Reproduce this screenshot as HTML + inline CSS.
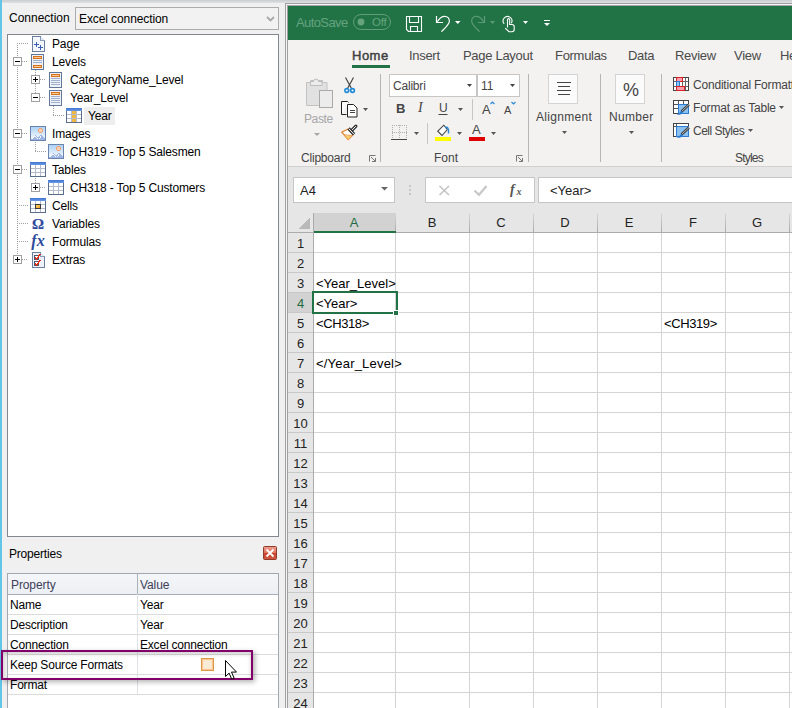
<!DOCTYPE html>
<html><head><meta charset="utf-8">
<style>
*{margin:0;padding:0;box-sizing:border-box}
html,body{width:792px;height:708px;overflow:hidden;background:#f0f0f0;font-family:"Liberation Sans",sans-serif;position:relative}
.a{position:absolute}
.t{position:absolute;white-space:nowrap;line-height:1}
svg{position:absolute;overflow:visible}
</style></head><body>

<div class="a" style="left:0px;top:0px;width:792px;height:3px;background:linear-gradient(#c9cdd2,#dfe1e3)"></div>
<div class="a" style="left:0px;top:0px;width:2px;height:708px;background:#62c6e8"></div>
<div class="t" style="left:9px;top:12px;font-size:12px;color:#000;">Connection</div>
<div class="a" style="left:75px;top:7px;width:204px;height:23px;border:1px solid #acacac;background:#f2f2f2"></div>
<div class="t" style="left:79px;top:13px;font-size:12px;color:#000;letter-spacing:-0.1px">Excel connection</div>
<svg style="left:0;top:0" width="1" height="1"><path d="M267 17l3.5 3.5l3.5-3.5" stroke="#a8a8a8" stroke-width="1.8" fill="none"/></svg>
<div class="a" style="left:7px;top:34px;width:272px;height:503px;border:1px solid #828790;background:#fff"></div>
<div class="t" style="left:52px;top:38px;font-size:12px;color:#000;letter-spacing:-0.15px">Page</div>
<div class="t" style="left:52px;top:56px;font-size:12px;color:#000;letter-spacing:-0.15px">Levels</div>
<div class="t" style="left:70px;top:74px;font-size:12px;color:#000;letter-spacing:-0.15px">CategoryName_Level</div>
<div class="t" style="left:70px;top:92px;font-size:12px;color:#000;letter-spacing:-0.15px">Year_Level</div>
<div class="a" style="left:84px;top:107px;width:31px;height:18px;background:#eeeeee"></div>
<div class="t" style="left:88px;top:110px;font-size:12px;color:#000;letter-spacing:-0.15px">Year</div>
<div class="t" style="left:52px;top:128px;font-size:12px;color:#000;letter-spacing:-0.15px">Images</div>
<div class="t" style="left:70px;top:146px;font-size:12px;color:#000;letter-spacing:-0.15px">CH319 - Top 5 Salesmen</div>
<div class="t" style="left:52px;top:164px;font-size:12px;color:#000;letter-spacing:-0.15px">Tables</div>
<div class="t" style="left:70px;top:182px;font-size:12px;color:#000;letter-spacing:-0.15px">CH318 - Top 5 Customers</div>
<div class="t" style="left:52px;top:200px;font-size:12px;color:#000;letter-spacing:-0.15px">Cells</div>
<div class="t" style="left:52px;top:218px;font-size:12px;color:#000;letter-spacing:-0.15px">Variables</div>
<div class="t" style="left:52px;top:236px;font-size:12px;color:#000;letter-spacing:-0.15px">Formulas</div>
<div class="t" style="left:52px;top:254px;font-size:12px;color:#000;letter-spacing:-0.15px">Extras</div>
<svg style="left:0;top:0" width="290" height="300" shape-rendering="crispEdges"><defs><linearGradient id="tb" x1="0" y1="0" x2="0" y2="1"><stop offset="0" stop-color="#3f74d0"/><stop offset="1" stop-color="#6a9ae8"/></linearGradient><linearGradient id="gold" x1="0" y1="0" x2="1" y2="1"><stop offset="0" stop-color="#f8dc70"/><stop offset="1" stop-color="#f09a18"/></linearGradient><linearGradient id="sky" x1="0" y1="0" x2="0" y2="1"><stop offset="0" stop-color="#a9d0f5"/><stop offset="0.7" stop-color="#e6f1fc"/><stop offset="1" stop-color="#f4f8fe"/></linearGradient></defs><path d="M17.5 43V255" stroke="#a0a0a0" stroke-dasharray="1 1"/><path d="M35.5 70V75" stroke="#a0a0a0" stroke-dasharray="1 1"/><path d="M35.5 84V93" stroke="#a0a0a0" stroke-dasharray="1 1"/><path d="M53.5 106V115" stroke="#a0a0a0" stroke-dasharray="1 1"/><path d="M35.5 142V151" stroke="#a0a0a0" stroke-dasharray="1 1"/><path d="M35.5 178V183" stroke="#a0a0a0" stroke-dasharray="1 1"/><path d="M17 43.5H28" stroke="#a0a0a0" stroke-dasharray="1 1"/><path d="M32.5 36.5h8l4 4v11h-12z" fill="#f4f7fc" stroke="#6b7f9e"/><path d="M40.5 36.5v4h4" fill="#dfe8f5" stroke="#8a9cb8"/><path d="M34 44.5h5M36.5 42v5M38 47.5h5M40.5 45v5" stroke="#3b5db5" stroke-width="1.1"/><path d="M22 61.5H28" stroke="#a0a0a0" stroke-dasharray="1 1"/><rect x="13.5" y="57.5" width="8" height="8" fill="#fff" stroke="#a0a0a0"/><path d="M15 61.5h5" stroke="#000"/><rect x="31.5" y="54.5" width="12" height="15" fill="#eef2f8" stroke="#62789a"/><rect x="33" y="56" width="9" height="3" fill="#d9731a"/><rect x="34" y="57" width="7" height="1" fill="#f6c89a"/><path d="M33 60.5h9M33 62.5h9" stroke="#9fb0cc"/><rect x="33" y="65" width="9" height="3" fill="#d9731a"/><rect x="34" y="66" width="7" height="1" fill="#f6c89a"/><path d="M40 79.5H46" stroke="#a0a0a0" stroke-dasharray="1 1"/><rect x="31.5" y="75.5" width="8" height="8" fill="#fff" stroke="#a0a0a0"/><path d="M33 79.5h5" stroke="#000"/><path d="M35.5 77v5" stroke="#000"/><rect x="49.5" y="72.5" width="12" height="15" fill="#eef2f8" stroke="#62789a"/><rect x="51" y="74" width="9" height="3" fill="#d9731a"/><rect x="52" y="75" width="7" height="1" fill="#f6c89a"/><path d="M51 78.5h9M51 80.5h9M51 82.5h9M51 84.5h9" stroke="#9fb0cc"/><path d="M40 97.5H46" stroke="#a0a0a0" stroke-dasharray="1 1"/><rect x="31.5" y="93.5" width="8" height="8" fill="#fff" stroke="#a0a0a0"/><path d="M33 97.5h5" stroke="#000"/><rect x="49.5" y="90.5" width="12" height="15" fill="#eef2f8" stroke="#62789a"/><rect x="51" y="92" width="9" height="3" fill="#d9731a"/><rect x="52" y="93" width="7" height="1" fill="#f6c89a"/><path d="M51 96.5h9M51 98.5h9M51 100.5h9M51 102.5h9" stroke="#9fb0cc"/><path d="M53 115.5H64" stroke="#a0a0a0" stroke-dasharray="1 1"/><rect x="66.5" y="108.5" width="15" height="14" fill="#fff" stroke="#5a6e8c"/><rect x="66" y="108" width="16" height="3" fill="url(#tb)"/><rect x="72" y="111" width="4" height="11" fill="#f0b840"/><path d="M71.5 111v11M76.5 111v11M67 114.5h14M67 118.5h14" stroke="#b4bccb"/><path d="M22 133.5H28" stroke="#a0a0a0" stroke-dasharray="1 1"/><rect x="13.5" y="129.5" width="8" height="8" fill="#fff" stroke="#a0a0a0"/><path d="M15 133.5h5" stroke="#000"/><rect x="30.5" y="126.5" width="15" height="14" fill="url(#sky)" stroke="#6a84ad"/><circle cx="40.5" cy="130.5" r="2.2" fill="#fbd0b0" stroke="#f49a6a" stroke-width="0.9"/><path d="M31 140L35 135L38 138L41 134.5L45 138.5V140z" fill="#9db4e4"/><path d="M32 139L35 136L37.5 138.5M39 139L41 136" stroke="#fff" stroke-width="0.9" fill="none"/><path d="M35 151.5H46" stroke="#a0a0a0" stroke-dasharray="1 1"/><rect x="48.5" y="144.5" width="15" height="14" fill="url(#sky)" stroke="#6a84ad"/><circle cx="58.5" cy="148.5" r="2.2" fill="#fbd0b0" stroke="#f49a6a" stroke-width="0.9"/><path d="M49 158L53 153L56 156L59 152.5L63 156.5V158z" fill="#9db4e4"/><path d="M50 157L53 154L55.5 156.5M57 157L59 154" stroke="#fff" stroke-width="0.9" fill="none"/><path d="M22 169.5H28" stroke="#a0a0a0" stroke-dasharray="1 1"/><rect x="13.5" y="165.5" width="8" height="8" fill="#fff" stroke="#a0a0a0"/><path d="M15 169.5h5" stroke="#000"/><rect x="30.5" y="162.5" width="15" height="14" fill="#fff" stroke="#5a6e8c"/><rect x="30" y="162" width="16" height="3" fill="url(#tb)"/><path d="M35.5 165v11M40.5 165v11M31 168.5h14M31 172.5h14" stroke="#b4bccb"/><path d="M40 187.5H46" stroke="#a0a0a0" stroke-dasharray="1 1"/><rect x="31.5" y="183.5" width="8" height="8" fill="#fff" stroke="#a0a0a0"/><path d="M33 187.5h5" stroke="#000"/><path d="M35.5 185v5" stroke="#000"/><rect x="48.5" y="180.5" width="15" height="14" fill="#fff" stroke="#5a6e8c"/><rect x="48" y="180" width="16" height="3" fill="url(#tb)"/><path d="M53.5 183v11M58.5 183v11M49 186.5h14M49 190.5h14" stroke="#b4bccb"/><path d="M17 205.5H28" stroke="#a0a0a0" stroke-dasharray="1 1"/><rect x="30.5" y="198.5" width="15" height="14" fill="#fff" stroke="#5a6e8c"/><rect x="30" y="198" width="16" height="3" fill="url(#tb)"/><path d="M35.5 201v11M40.5 201v11M31 204.5h14M31 208.5h14" stroke="#b4bccb"/><rect x="35.5" y="204.5" width="5" height="4" fill="url(#gold)" stroke="#3a3a3a"/><path d="M17 223.5H28" stroke="#a0a0a0" stroke-dasharray="1 1"/><text x="38" y="229" font-family="Liberation Serif" font-weight="bold" font-size="15" fill="#2b4a9c" stroke="#2b4a9c" stroke-width="0.2" text-anchor="middle">&#937;</text><path d="M17 241.5H28" stroke="#a0a0a0" stroke-dasharray="1 1"/><text x="38" y="246" font-family="Liberation Serif" font-style="italic" font-weight="bold" font-size="16" fill="#2b4a9c" text-anchor="middle">fx</text><path d="M22 259.5H28" stroke="#a0a0a0" stroke-dasharray="1 1"/><rect x="13.5" y="255.5" width="8" height="8" fill="#fff" stroke="#a0a0a0"/><path d="M15 259.5h5" stroke="#000"/><path d="M17.5 257v5" stroke="#000"/><path d="M32.5 252.5h8l4 4v11h-12z" fill="#eef2f8" stroke="#6b7f9e"/><path d="M40.5 252.5v4h4" fill="#dfe8f5" stroke="#8a9cb8"/><rect x="34.5" y="255.5" width="4" height="4" fill="#fff" stroke="#4a5a70"/><rect x="34.5" y="261.5" width="4" height="4" fill="#fff" stroke="#4a5a70"/><path d="M35 257l1.5 2l4-5M35 263l1.5 2l4-5" stroke="#e82a10" stroke-width="1.4" fill="none"/></svg>
<div class="t" style="left:9px;top:548px;font-size:12px;color:#000;letter-spacing:-0.2px">Properties</div>
<svg style="left:0;top:0" width="1" height="1"><rect x="263.5" y="546.5" width="13" height="13" rx="1" fill="url(#cg)" stroke="#8e3b2c"/><defs><linearGradient id="cg" x1="0" y1="0" x2="0" y2="1"><stop offset="0" stop-color="#f0a090"/><stop offset="0.5" stop-color="#e0705c"/><stop offset="0.5" stop-color="#c8432d"/><stop offset="1" stop-color="#d05a40"/></linearGradient></defs><path d="M266.5 549.5l7 7M273.5 549.5l-7 7" stroke="#fff" stroke-width="1.8"/></svg>
<div class="a" style="left:7px;top:573px;width:272px;height:140px;border:1px solid #a3a8b0;background:#fff"></div>
<div class="a" style="left:8px;top:574px;width:270px;height:20px;background:linear-gradient(#f4f6f9,#eceff3)"></div>
<svg style="left:0;top:0" width="1" height="1" shape-rendering="crispEdges"><path d="M8 594.5H278" stroke="#a8aeb5"/><path d="M137.5 594V694" stroke="#dfe2e6"/><path d="M137.5 574V594" stroke="#a9b0b8"/><path d="M8 614.5H278" stroke="#dcdcdc"/><path d="M8 634.5H278" stroke="#dcdcdc"/><path d="M8 654.5H278" stroke="#dcdcdc"/><path d="M8 674.5H278" stroke="#dcdcdc"/><path d="M8 694.5H278" stroke="#dcdcdc"/></svg>
<div class="t" style="left:11px;top:579px;font-size:12px;color:#40405a;letter-spacing:-0.1px">Property</div>
<div class="t" style="left:140px;top:579px;font-size:12px;color:#40405a;letter-spacing:-0.1px">Value</div>
<div class="t" style="left:10px;top:599px;font-size:12px;color:#000;letter-spacing:-0.2px">Name</div>
<div class="t" style="left:140px;top:599px;font-size:12px;color:#000;letter-spacing:-0.2px">Year</div>
<div class="t" style="left:10px;top:619px;font-size:12px;color:#000;letter-spacing:-0.2px">Description</div>
<div class="t" style="left:140px;top:619px;font-size:12px;color:#000;letter-spacing:-0.2px">Year</div>
<div class="t" style="left:10px;top:639px;font-size:12px;color:#000;letter-spacing:-0.2px">Connection</div>
<div class="t" style="left:140px;top:639px;font-size:12px;color:#000;letter-spacing:-0.2px">Excel connection</div>
<div class="t" style="left:10px;top:659px;font-size:12px;color:#000;letter-spacing:-0.2px">Keep Source Formats</div>
<div class="t" style="left:10px;top:679px;font-size:12px;color:#000;letter-spacing:-0.2px">Format</div>
<div class="a" style="left:1px;top:650px;width:252px;height:30px;border:2px solid #82006a;box-shadow:2px 2px 5px rgba(0,0,0,0.3), inset 0 2px 4px rgba(0,0,0,0.2)"></div>
<svg style="left:0;top:0" width="1" height="1" shape-rendering="crispEdges"><rect x="201.5" y="658.5" width="12" height="12" fill="#fdf0dc" stroke="#dc9a40"/><rect x="202.5" y="659.5" width="10" height="10" fill="#fbe6c8" stroke="#fcc498"/><rect x="204" y="661" width="7" height="7" fill="#f8ecd8"/></svg>
<svg style="left:0;top:0" width="1" height="1"><path d="M225.5 660.5v16l3.6-3.4l2.6 6l2.4-1l-2.6-6h5z" fill="#fff" stroke="#000" stroke-width="1" stroke-linejoin="miter"/></svg>
<div class="a" style="left:285px;top:3px;width:507px;height:705px;background:#f3f2f1"></div>
<div class="a" style="left:288px;top:6px;width:504px;height:34px;background:#217346"></div>
<div class="t" style="left:296px;top:16px;font-size:13px;color:#65a37f;letter-spacing:-0.6px">AutoSave</div>
<svg style="left:0;top:0" width="1" height="1"><rect x="353.5" y="14.5" width="37" height="15" rx="7.5" fill="none" stroke="#5f9e79"/><circle cx="361" cy="22" r="3.4" fill="#65a37f"/><path d="M406.5 16.5H421.5V31.5H408.5L406.5 29.5Z" fill="none" stroke="#fff" stroke-width="1.1"/><path d="M409.5 16.5v6h9v-6M410.5 31.5v-5h7v5" fill="none" stroke="#fff" stroke-width="1.1"/><path d="M436.5 16v6.5h6.5" fill="none" stroke="#fff" stroke-width="1.2"/><path d="M437.3 21.8C439.5 18 442 16.3 444.6 16.3C447.5 16.3 449.4 18.5 449.4 21.3C449.4 24.5 445 28 441.4 31.7" fill="none" stroke="#fff" stroke-width="1.2"/><path d="M455 21h5.5l-2.75 3z" fill="#fff"/><path d="M484.5 16v6.5h-6.5" fill="none" stroke="#5c9a76" stroke-width="1.2"/><path d="M483.7 21.8C481.5 18 479 16.3 476.4 16.3C473.5 16.3 471.6 18.5 471.6 21.3C471.6 24.5 476 28 479.6 31.7" fill="none" stroke="#5c9a76" stroke-width="1.2"/><path d="M490 21h5l-2.5 3z" fill="#5c9a76"/><path d="M504.2 23.8A4.4 4.4 0 1 1 511.3 23.2" fill="none" stroke="#fff" stroke-width="1.1"/><path d="M507.5 27.5V19.7a1.1 1.1 0 0 1 2.2 0V24.5h2.3a2.2 2.2 0 0 1 2.2 2.2v2.8a2.2 2.2 0 0 1-2.2 2.2h-3l-3.8-3.6" fill="#217346" stroke="#fff" stroke-width="1.1"/><path d="M523 21h5l-2.5 3z" fill="#fff"/><path d="M544 20.5h6" stroke="#fff" stroke-width="1"/><path d="M544 23h6l-3 3z" fill="#fff"/></svg>
<div class="t" style="left:372px;top:17px;font-size:11.5px;color:#65a37f;letter-spacing:-0.2px">Off</div>
<div class="t" style="left:352px;top:49px;font-size:13px;color:#404040;letter-spacing:0.5px;-webkit-text-stroke:0.45px #404040">Home</div>
<div class="t" style="left:409px;top:49px;font-size:13px;color:#4a4a4a;letter-spacing:-0.3px">Insert</div>
<div class="t" style="left:463px;top:49px;font-size:13px;color:#4a4a4a;letter-spacing:-0.3px">Page Layout</div>
<div class="t" style="left:555px;top:49px;font-size:13px;color:#4a4a4a;letter-spacing:-0.3px">Formulas</div>
<div class="t" style="left:628px;top:49px;font-size:13px;color:#4a4a4a;letter-spacing:-0.3px">Data</div>
<div class="t" style="left:675px;top:49px;font-size:13px;color:#4a4a4a;letter-spacing:-0.3px">Review</div>
<div class="t" style="left:734px;top:49px;font-size:13px;color:#4a4a4a;letter-spacing:-0.3px">View</div>
<div class="t" style="left:780px;top:49px;font-size:13px;color:#4a4a4a;letter-spacing:-0.3px">Help</div>
<div class="a" style="left:352px;top:65px;width:38px;height:3px;background:#217346"></div>
<div class="a" style="left:287px;top:166px;width:505px;height:1px;background:#d2d0ce"></div>
<div class="a" style="left:287px;top:167px;width:505px;height:46px;background:#e6e6e6"></div>
<svg style="left:0;top:0" width="1" height="1"><path d="M380.5 74V162" stroke="#b8b6b4"/><path d="M528.5 74V162" stroke="#b8b6b4"/><path d="M600.5 74V162" stroke="#b8b6b4"/><path d="M661.5 74V162" stroke="#b8b6b4"/><path d="M306.5 82.5h4v-2h12v2h4.5v23h-20.5z" fill="#e1e1e1" stroke="#c2c2c2"/><path d="M310.5 85.5v-4h3a2.5 2.5 0 0 1 5 0h3.5v4z" fill="#ececec" stroke="#bdbdbd"/><rect x="319.5" y="90.5" width="13" height="17" fill="#ececec" stroke="#a9a9a9"/><path d="M314 133h6l-3 3z" fill="#a6a6a6"/><path d="M345.5 77.5l6 11M353.5 77.5l-6 11" stroke="#444" stroke-width="1.2"/><circle cx="346.8" cy="90.5" r="1.9" fill="none" stroke="#1e8ad8" stroke-width="1.6"/><circle cx="352.5" cy="90.5" r="1.9" fill="none" stroke="#1e8ad8" stroke-width="1.6"/><path d="M341.5 114.5v-13h6l1 1" fill="#fff" stroke="#222" stroke-width="1"/><path d="M341.5 114.5h5" stroke="#222"/><path d="M347.5 104.5h6l3.5 3.5v9h-9.5z" fill="#fff" stroke="#222"/><path d="M350 110.5h5M350 112.5h5" stroke="#444"/><path d="M363 108h5l-2.5 3z" fill="#555"/><path d="M341.8 132.2l6.3-3.2l5 5.6l-5 5z" fill="#fff" stroke="#ea8a3a" stroke-width="1.3"/><path d="M344.5 135.2l3.6 3.9l3.4-3.4z" fill="#f6cf6a"/><path d="M344 134.6l7.5 1" stroke="#ea8a3a" stroke-width="0.8"/><path d="M351.3 130.8l4.6-4.6" stroke="#333" stroke-width="3.2" stroke-linecap="round"/><path d="M351.3 130.8l4.6-4.6" stroke="#fff" stroke-width="1"/><path d="M348.6 128.4l5.4 5.9" stroke="#333" stroke-width="3.2"/><path d="M348.8 128.7l5 5.4" stroke="#fff" stroke-width="1"/><path d="M369.5 161.5v-6h6" fill="none" stroke="#777"/><path d="M371 157l4.5 4.5M372 161.5h3.5v-3.5" fill="none" stroke="#777"/><path d="M516.5 161.5v-6h6" fill="none" stroke="#777"/><path d="M518 157l4.5 4.5M519 161.5h3.5v-3.5" fill="none" stroke="#777"/><rect x="389.5" y="74.5" width="87" height="22" fill="#fff" stroke="#c8c6c4"/><rect x="477.5" y="74.5" width="42" height="22" fill="#fff" stroke="#c8c6c4"/><path d="M467 84h5l-2.5 3z" fill="#444"/><path d="M510 84h5l-2.5 3z" fill="#444"/><path d="M438.5 114.5h9" stroke="#444"/><path d="M458 108h5l-2.5 3z" fill="#555"/><path d="M472.5 99V120" stroke="#c8c6c4"/><path d="M490.5 104l2 -2l2 2" fill="none" stroke="#2b88d8" stroke-width="1.2"/><path d="M511.5 102l2 2l2-2" fill="none" stroke="#2b88d8" stroke-width="1.2"/><path d="M392 125.5h15M392 132.5h15M392.5 125v14M399.5 125v14M406.5 125v14" stroke="#b0b0b0" stroke-dasharray="1 1"/><path d="M391 139.5h16" stroke="#444"/><path d="M414 132h5l-2.5 3z" fill="#555"/><path d="M427.5 123V144" stroke="#c8c6c4"/><path d="M437.8 131.2l6-6l3.5 4.3l-5.3 6z" fill="#fff" stroke="#444" stroke-width="1.1"/><path d="M445 127.5c2.5-1 4 0.5 3.5 6" fill="none" stroke="#2b88d8" stroke-width="1.5"/><rect x="435" y="137" width="16" height="4" fill="#ffff00"/><path d="M457 132h5l-2.5 3z" fill="#555"/><rect x="469" y="137" width="16" height="4" fill="#e00000"/><path d="M491 132h5l-2.5 3z" fill="#555"/><rect x="548.5" y="74.5" width="29" height="29" fill="#fbfbfb" stroke="#d4d4d4"/><path d="M557 82.5h14M558 86.5h12M557 90.5h14M558 94.5h12" stroke="#444"/><path d="M562 131h5l-2.5 3z" fill="#555"/><rect x="615.5" y="74.5" width="29" height="29" fill="#fbfbfb" stroke="#d4d4d4"/><path d="M629 131h5l-2.5 3z" fill="#555"/><rect x="673.5" y="77.5" width="15" height="13" fill="#fff" stroke="#444"/><path d="M674 81.5h14M674 86.5h14M676.5 78v12M682.5 78v12M685.5 78v12" stroke="#666"/><rect x="676.5" y="77.5" width="6" height="4" fill="#f4a0b0" stroke="#e02020"/><rect x="676.5" y="81.5" width="3" height="5" fill="#8ec4f0" stroke="#2b7cd3"/><rect x="676.5" y="86.5" width="8" height="4" fill="#f4a0b0" stroke="#e02020"/><rect x="673.5" y="100.5" width="15" height="13" fill="#fff" stroke="#444"/><path d="M674 104.5h14M674 108.5h5M678.5 101v12M683.5 101v3.5" stroke="#555"/><rect x="678.5" y="104.5" width="10" height="9" fill="#8cc0ee" stroke="#2b7cd3"/><path d="M689 104.5l-7.5 7" stroke="#333" stroke-width="2.4"/><path d="M689 104.5l-7.5 7" stroke="#fff" stroke-width="0.7"/><path d="M681.8 110.8c-1.5 0.3-2 1.5-2.5 2.5c-0.5 0.8-1.5 1-2.8 1.2c2.5 0.8 5 0.2 6.3-2z" fill="#2b7cd3"/><path d="M779 106h5l-2.5 3z" fill="#555"/><rect x="673.5" y="123.5" width="15" height="13" fill="#fff" stroke="#444"/><path d="M674 126.5h2M676.5 124v2" stroke="#555"/><rect x="676.5" y="126.5" width="12" height="10" fill="#8cc0ee" stroke="#2b7cd3"/><path d="M689 127.5l-7.5 7" stroke="#333" stroke-width="2.4"/><path d="M689 127.5l-7.5 7" stroke="#fff" stroke-width="0.7"/><path d="M681.8 133.8c-1.5 0.3-2 1.5-2.5 2.5c-0.5 0.8-1.5 1-2.8 1.2c2.5 0.8 5 0.2 6.3-2z" fill="#2b7cd3"/><path d="M748 129h5l-2.5 3z" fill="#555"/></svg>
<div class="t" style="left:304px;top:113px;font-size:12px;color:#a6a6a6;letter-spacing:-0.4px">Paste</div>
<div class="t" style="left:301px;top:152px;font-size:12px;color:#444;letter-spacing:-0.2px">Clipboard</div>
<div class="t" style="left:393px;top:80px;font-size:12px;color:#444;letter-spacing:-0.2px">Calibri</div>
<div class="t" style="left:481px;top:80px;font-size:12px;color:#444;">11</div>
<div class="t" style="left:396px;top:102px;font-size:13px;color:#444;font-weight:bold">B</div>
<div class="t" style="left:418px;top:101px;font-size:14px;color:#444;font-style:italic;font-family:Liberation Serif">I</div>
<div class="t" style="left:439px;top:102px;font-size:12px;color:#444;">U</div>
<div class="t" style="left:482px;top:103px;font-size:13px;color:#444;">A</div>
<div class="t" style="left:504px;top:105px;font-size:11px;color:#444;">A</div>
<div class="t" style="left:472px;top:123px;font-size:13px;color:#444;">A</div>
<div class="t" style="left:434px;top:152px;font-size:12px;color:#444;">Font</div>
<div class="t" style="left:536px;top:111px;font-size:12px;color:#444;letter-spacing:0.3px">Alignment</div>
<div class="t" style="left:623px;top:81px;font-size:18px;color:#444;">%</div>
<div class="t" style="left:609px;top:111px;font-size:12px;color:#444;letter-spacing:0.3px">Number</div>
<div class="t" style="left:693px;top:79px;font-size:12px;color:#444;letter-spacing:-0.2px">Conditional Formatting</div>
<div class="t" style="left:693px;top:102px;font-size:12px;color:#444;letter-spacing:-0.2px">Format as Table</div>
<div class="t" style="left:693px;top:125px;font-size:12px;color:#444;letter-spacing:-0.5px">Cell Styles</div>
<div class="t" style="left:735px;top:152px;font-size:12px;color:#444;letter-spacing:-0.8px">Styles</div>
<svg style="left:0;top:0" width="1" height="1"><rect x="293.5" y="177.5" width="101" height="25" fill="#fff" stroke="#c6c6c6"/><path d="M381 187h7l-3.5 3.5z" fill="#666"/><path d="M410 185.5v1M410 189.5v1M410 193.5v1" stroke="#999" stroke-width="1.5"/><rect x="425.5" y="177.5" width="109" height="25" fill="#fff" stroke="#c6c6c6"/><path d="M439.5 186l9.5 9M449 186l-9.5 9" stroke="#c4c4c4" stroke-width="1.6"/><path d="M474.5 190.5l4.5 4.3l7.5-8.8" fill="none" stroke="#c8c8c8" stroke-width="2.2"/><rect x="538.5" y="177.5" width="260" height="25" fill="#fff" stroke="#c6c6c6"/></svg>
<div class="t" style="left:300px;top:184px;font-size:13px;color:#222;letter-spacing:0px">A4</div>
<svg style="left:0;top:0" width="1" height="1"><text x="510" y="194" font-family="Liberation Serif" font-style="italic" font-weight="bold" font-size="14" fill="#555">f</text><text x="516.5" y="194.5" font-family="Liberation Serif" font-style="italic" font-weight="bold" font-size="10" fill="#555">x</text></svg>
<div class="t" style="left:550px;top:184px;font-size:13px;color:#222;">&lt;Year&gt;</div>
<div class="a" style="left:288px;top:213px;width:504px;height:495px;background:#fff"></div>
<div class="a" style="left:288px;top:213px;width:25px;height:495px;background:#e6e6e6"></div>
<div class="a" style="left:288px;top:213px;width:504px;height:19px;background:#e6e6e6"></div>
<div class="a" style="left:314px;top:213px;width:81px;height:19px;background:#d2d2d2"></div>
<div class="a" style="left:288px;top:293px;width:25px;height:19px;background:#d2d2d2"></div>
<div class="a" style="left:288px;top:232px;width:504px;height:1px;background:#ababab"></div>
<svg style="left:0;top:0" width="1" height="1" shape-rendering="crispEdges"><defs><linearGradient id="hs" gradientUnits="userSpaceOnUse" x1="0" y1="213" x2="0" y2="232"><stop offset="0" stop-color="#d8d8d8"/><stop offset="1" stop-color="#a8a8a8"/></linearGradient></defs><path d="M313.5 213V708" stroke="#ababab"/><path d="M395.5 233V708" stroke="#d4d4d4"/><path d="M395.5 213V232" stroke="url(#hs)"/><path d="M469.5 233V708" stroke="#d4d4d4"/><path d="M469.5 213V232" stroke="url(#hs)"/><path d="M533.5 233V708" stroke="#d4d4d4"/><path d="M533.5 213V232" stroke="url(#hs)"/><path d="M597.5 233V708" stroke="#d4d4d4"/><path d="M597.5 213V232" stroke="url(#hs)"/><path d="M661.5 233V708" stroke="#d4d4d4"/><path d="M661.5 213V232" stroke="url(#hs)"/><path d="M725.5 233V708" stroke="#d4d4d4"/><path d="M725.5 213V232" stroke="url(#hs)"/><path d="M789.5 233V708" stroke="#d4d4d4"/><path d="M789.5 213V232" stroke="url(#hs)"/><path d="M314 252.5H792" stroke="#d4d4d4"/><path d="M288 252.5H313" stroke="#c8c8c8"/><path d="M314 272.5H792" stroke="#d4d4d4"/><path d="M288 272.5H313" stroke="#c8c8c8"/><path d="M314 292.5H792" stroke="#d4d4d4"/><path d="M288 292.5H313" stroke="#c8c8c8"/><path d="M314 312.5H792" stroke="#d4d4d4"/><path d="M288 312.5H313" stroke="#c8c8c8"/><path d="M314 332.5H792" stroke="#d4d4d4"/><path d="M288 332.5H313" stroke="#c8c8c8"/><path d="M314 352.5H792" stroke="#d4d4d4"/><path d="M288 352.5H313" stroke="#c8c8c8"/><path d="M314 372.5H792" stroke="#d4d4d4"/><path d="M288 372.5H313" stroke="#c8c8c8"/><path d="M314 392.5H792" stroke="#d4d4d4"/><path d="M288 392.5H313" stroke="#c8c8c8"/><path d="M314 412.5H792" stroke="#d4d4d4"/><path d="M288 412.5H313" stroke="#c8c8c8"/><path d="M314 432.5H792" stroke="#d4d4d4"/><path d="M288 432.5H313" stroke="#c8c8c8"/><path d="M314 452.5H792" stroke="#d4d4d4"/><path d="M288 452.5H313" stroke="#c8c8c8"/><path d="M314 472.5H792" stroke="#d4d4d4"/><path d="M288 472.5H313" stroke="#c8c8c8"/><path d="M314 492.5H792" stroke="#d4d4d4"/><path d="M288 492.5H313" stroke="#c8c8c8"/><path d="M314 512.5H792" stroke="#d4d4d4"/><path d="M288 512.5H313" stroke="#c8c8c8"/><path d="M314 532.5H792" stroke="#d4d4d4"/><path d="M288 532.5H313" stroke="#c8c8c8"/><path d="M314 552.5H792" stroke="#d4d4d4"/><path d="M288 552.5H313" stroke="#c8c8c8"/><path d="M314 572.5H792" stroke="#d4d4d4"/><path d="M288 572.5H313" stroke="#c8c8c8"/><path d="M314 592.5H792" stroke="#d4d4d4"/><path d="M288 592.5H313" stroke="#c8c8c8"/><path d="M314 612.5H792" stroke="#d4d4d4"/><path d="M288 612.5H313" stroke="#c8c8c8"/><path d="M314 632.5H792" stroke="#d4d4d4"/><path d="M288 632.5H313" stroke="#c8c8c8"/><path d="M314 652.5H792" stroke="#d4d4d4"/><path d="M288 652.5H313" stroke="#c8c8c8"/><path d="M314 672.5H792" stroke="#d4d4d4"/><path d="M288 672.5H313" stroke="#c8c8c8"/><path d="M314 692.5H792" stroke="#d4d4d4"/><path d="M288 692.5H313" stroke="#c8c8c8"/><path d="M314 712.5H792" stroke="#d4d4d4"/><path d="M288 712.5H313" stroke="#c8c8c8"/><path d="M298 229h12v-12z" fill="#b9b9b9"/><rect x="314" y="231" width="82" height="2" fill="#217346"/><rect x="313" y="292" width="84" height="21" fill="none" stroke="#217346" stroke-width="2"/><rect x="393" y="310" width="5" height="5" fill="#217346" stroke="#fff" stroke-width="1"/></svg>
<div class="t" style="left:313px;top:216px;width:82px;text-align:center;font-size:13px;color:#1d6b40">A</div>
<div class="t" style="left:395px;top:216px;width:74px;text-align:center;font-size:13px;color:#222">B</div>
<div class="t" style="left:469px;top:216px;width:64px;text-align:center;font-size:13px;color:#222">C</div>
<div class="t" style="left:533px;top:216px;width:64px;text-align:center;font-size:13px;color:#222">D</div>
<div class="t" style="left:597px;top:216px;width:64px;text-align:center;font-size:13px;color:#222">E</div>
<div class="t" style="left:661px;top:216px;width:64px;text-align:center;font-size:13px;color:#222">F</div>
<div class="t" style="left:725px;top:216px;width:64px;text-align:center;font-size:13px;color:#222">G</div>
<div class="t" style="left:288px;top:237px;width:25px;text-align:center;font-size:13px;color:#222">1</div>
<div class="t" style="left:288px;top:257px;width:25px;text-align:center;font-size:13px;color:#222">2</div>
<div class="t" style="left:288px;top:277px;width:25px;text-align:center;font-size:13px;color:#222">3</div>
<div class="t" style="left:288px;top:297px;width:25px;text-align:center;font-size:13px;color:#1d6b40">4</div>
<div class="t" style="left:288px;top:317px;width:25px;text-align:center;font-size:13px;color:#222">5</div>
<div class="t" style="left:288px;top:337px;width:25px;text-align:center;font-size:13px;color:#222">6</div>
<div class="t" style="left:288px;top:357px;width:25px;text-align:center;font-size:13px;color:#222">7</div>
<div class="t" style="left:288px;top:377px;width:25px;text-align:center;font-size:13px;color:#222">8</div>
<div class="t" style="left:288px;top:397px;width:25px;text-align:center;font-size:13px;color:#222">9</div>
<div class="t" style="left:288px;top:417px;width:25px;text-align:center;font-size:13px;color:#222">10</div>
<div class="t" style="left:288px;top:437px;width:25px;text-align:center;font-size:13px;color:#222">11</div>
<div class="t" style="left:288px;top:457px;width:25px;text-align:center;font-size:13px;color:#222">12</div>
<div class="t" style="left:288px;top:477px;width:25px;text-align:center;font-size:13px;color:#222">13</div>
<div class="t" style="left:288px;top:497px;width:25px;text-align:center;font-size:13px;color:#222">14</div>
<div class="t" style="left:288px;top:517px;width:25px;text-align:center;font-size:13px;color:#222">15</div>
<div class="t" style="left:288px;top:537px;width:25px;text-align:center;font-size:13px;color:#222">16</div>
<div class="t" style="left:288px;top:557px;width:25px;text-align:center;font-size:13px;color:#222">17</div>
<div class="t" style="left:288px;top:577px;width:25px;text-align:center;font-size:13px;color:#222">18</div>
<div class="t" style="left:288px;top:597px;width:25px;text-align:center;font-size:13px;color:#222">19</div>
<div class="t" style="left:288px;top:617px;width:25px;text-align:center;font-size:13px;color:#222">20</div>
<div class="t" style="left:288px;top:637px;width:25px;text-align:center;font-size:13px;color:#222">21</div>
<div class="t" style="left:288px;top:657px;width:25px;text-align:center;font-size:13px;color:#222">22</div>
<div class="t" style="left:288px;top:677px;width:25px;text-align:center;font-size:13px;color:#222">23</div>
<div class="t" style="left:288px;top:697px;width:25px;text-align:center;font-size:13px;color:#222">24</div>
<div class="t" style="left:316px;top:277px;font-size:13px;color:#000;">&lt;Year_Level&gt;</div>
<div class="t" style="left:316px;top:297px;font-size:13px;color:#000;">&lt;Year&gt;</div>
<div class="t" style="left:316px;top:317px;font-size:13px;color:#000;letter-spacing:-0.4px">&lt;CH318&gt;</div>
<div class="t" style="left:316px;top:357px;font-size:13px;color:#000;letter-spacing:0.2px">&lt;/Year_Level&gt;</div>
<div class="t" style="left:664px;top:317px;font-size:13px;color:#000;letter-spacing:-0.4px">&lt;CH319&gt;</div>
<div class="a" style="left:285px;top:3px;width:507px;height:1px;background:#a0a0a0"></div>
<div class="a" style="left:286px;top:4px;width:506px;height:1px;background:#f6f6f6"></div>
<div class="a" style="left:287px;top:5px;width:505px;height:1px;background:#aaa4a4"></div>
<div class="a" style="left:285px;top:3px;width:1px;height:705px;background:#a0a0a0"></div>
<div class="a" style="left:286px;top:4px;width:1px;height:704px;background:#f4f4f4"></div>
<div class="a" style="left:287px;top:5px;width:1px;height:703px;background:#a0a0a0"></div>
</body></html>
